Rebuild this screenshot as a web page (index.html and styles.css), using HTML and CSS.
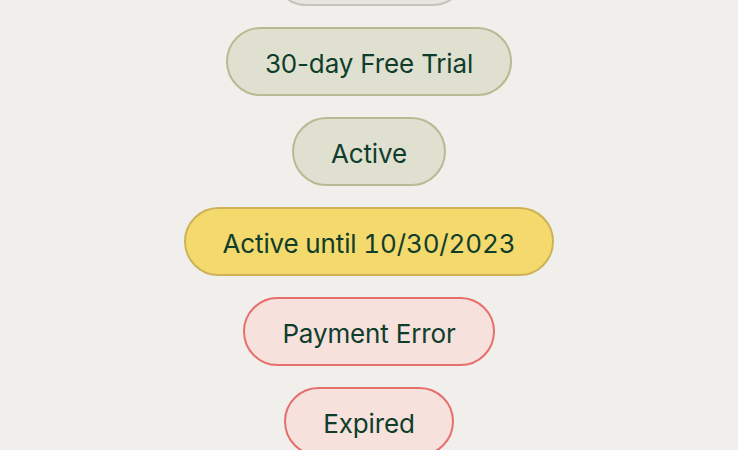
FILE: index.html
```html
<!DOCTYPE html>
<html>
  <head>
    <title>Subscription statuses</title>
    <meta charset="UTF-8" />
    <link rel="stylesheet" href="styles.css">
  </head>
  <body>
    <div class="statuses">
      <span class="pill grey blank"></span>
      <span class="pill green">30-day Free Trial</span>
      <span class="pill green">Active</span>
      <span class="pill yellow">Active until 10/30/2023</span>
      <span class="pill red">Payment Error</span>
      <span class="pill red">Expired</span>
    </div>
  </body>
</html>
```

FILE: styles.css
```css
html,
body {
  margin: 0;
  padding: 0;
  height: 100%;
  overflow: hidden;
  background: #f1efeb;
}
.statuses {
  display: flex;
  flex-direction: column;
  align-items: center;
  gap: 21px;
  margin-top: -63px;
}
.pill {
  box-sizing: border-box;
  height: 69px;
  padding: 3px 37px 0;
  display: flex;
  align-items: center;
  border-radius: 35px;
  border: 2px solid;
  font-family: Inter, "Liberation Sans", sans-serif;
  font-size: 26px;
  letter-spacing: -0.15px;
  color: #0f3d2b;
  white-space: nowrap;
}
.blank {
  width: 195px;
}
.grey {
  background: #e6e5e1;
  border-color: #c3c2bd;
}
.green {
  background: #dfe0cf;
  border-color: #b7ba93;
}
.yellow {
  background: #f4d96d;
  border-color: #cdb257;
  font-variant-numeric: tabular-nums;
}
.red {
  background: #f6e1dd;
  border-color: #e76f6b;
}
```
